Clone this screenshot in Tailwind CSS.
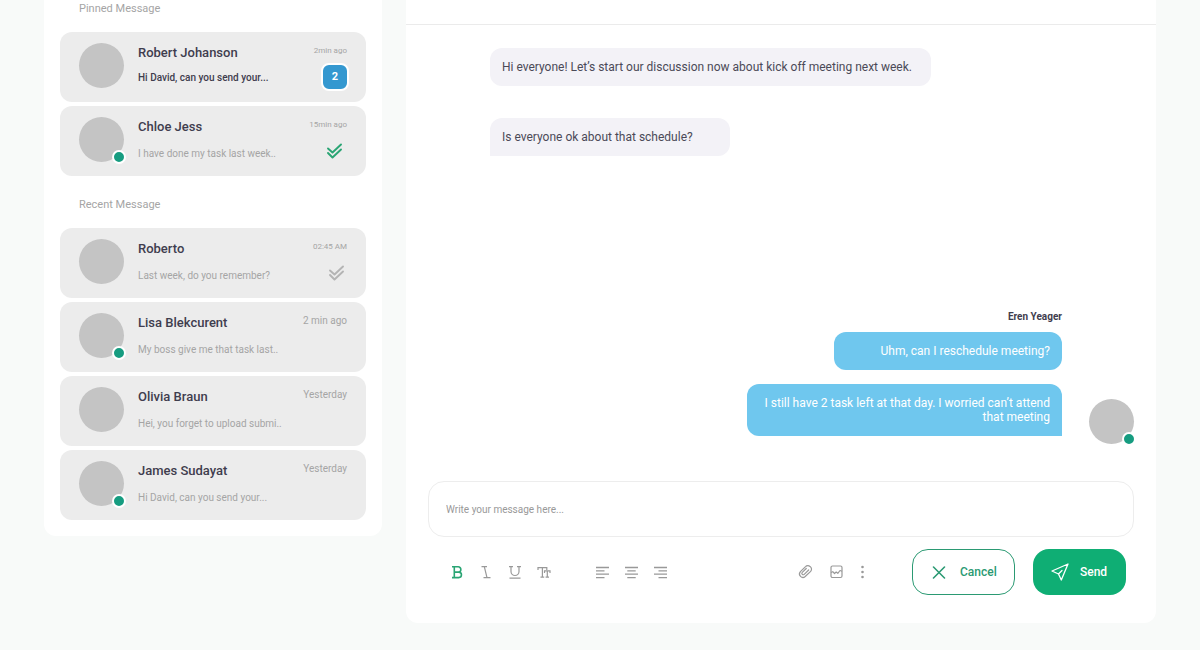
<!DOCTYPE html>
<html lang="en">
<head>
<meta charset="utf-8">
<meta name="viewport" content="width=device-width, initial-scale=1">
<title>Messages</title>
<script src="https://cdn.jsdelivr.net/npm/@tailwindcss/browser@4"></script>
</head>
<body class="min-h-screen bg-[#f8faf9] font-['Roboto','Liberation_Sans',sans-serif] text-[#3f3d4e]">
<div class="flex items-start gap-6 px-11">

  <!-- Conversations -->
  <aside class="w-[338px] shrink-0 rounded-b-xl bg-white px-4 pb-4">
    <h2 class="px-[19px] text-[11px] leading-[18px] text-[#a5a5a5]">Pinned Message</h2>
    <nav aria-label="Pinned messages" class="mt-3.5 flex flex-col gap-1">
      <a href="#" class="flex h-[70px] items-start gap-3.5 rounded-xl bg-[#ececec] px-[19px] pt-[11px]">
        <span class="size-[45px] shrink-0 rounded-full bg-[#c4c4c4]"></span>
        <span class="flex min-w-0 grow flex-col gap-[7px]">
          <span class="text-[13px] leading-5 font-medium">Robert Johanson</span>
          <span class="truncate text-[10px] leading-4 font-medium">Hi David, can you send your...</span>
        </span>
        <span class="flex shrink-0 flex-col items-end gap-1">
          <span class="text-[8px] leading-4 text-[#a5a5a5]">2min ago</span>
          <span class="-mr-0.5 flex size-7 items-center justify-center rounded-lg border-2 border-white bg-[#3498d0] text-[11px] font-bold text-white">2</span>
        </span>
      </a>
      <a href="#" class="flex h-[70px] items-start gap-3.5 rounded-xl bg-[#ececec] px-[19px] pt-[11px]">
        <span class="relative size-[45px] shrink-0 rounded-full bg-[#c4c4c4]"><span class="absolute -right-0.5 -bottom-0.5 size-3.5 rounded-full border-2 border-white bg-[#169c80]"></span></span>
        <span class="flex min-w-0 grow flex-col gap-[9px]">
          <span class="text-[13px] leading-5 font-medium">Chloe Jess</span>
          <span class="truncate text-[10px] leading-4 text-[#a5a5a5]">I have done my task last week..</span>
        </span>
        <span class="flex shrink-0 flex-col items-end gap-2.5">
          <span class="text-[8px] leading-4 text-[#a5a5a5]">15min ago</span>
          <svg class="mr-1 h-4 w-[17px]" viewBox="0 0 17 16" fill="none" stroke="#2aa574" stroke-width="1.900" stroke-linecap="round" stroke-linejoin="round" aria-label="Read"><path d="M2 5.500l4.500 4 8.500-8M2 10l4.500 4.500 8.500-8"/></svg>
        </span>
      </a>
    </nav>

    <h2 class="mt-5 px-[19px] text-[11px] leading-[18px] text-[#a5a5a5]">Recent Message</h2>
    <nav aria-label="Recent messages" class="mt-3.5 flex flex-col gap-1">
      <a href="#" class="flex h-[70px] items-start gap-3.5 rounded-xl bg-[#ececec] px-[19px] pt-[11px]">
        <span class="size-[45px] shrink-0 rounded-full bg-[#c4c4c4]"></span>
        <span class="flex min-w-0 grow flex-col gap-[9px]">
          <span class="text-[13px] leading-5 font-medium">Roberto</span>
          <span class="truncate text-[10px] leading-4 text-[#a5a5a5]">Last week, do you remember?</span>
        </span>
        <span class="flex shrink-0 flex-col items-end gap-2.5">
          <span class="text-[8px] leading-4 text-[#a5a5a5]">02:45 AM</span>
          <svg class="mr-0.5 h-4 w-[17px]" viewBox="0 0 17 16" fill="none" stroke="#b4b4b4" stroke-width="1.900" stroke-linecap="round" stroke-linejoin="round" aria-label="Delivered"><path d="M2 5.500l4.500 4 8.500-8M2 10l4.500 4.500 8.500-8"/></svg>
        </span>
      </a>
      <a href="#" class="flex h-[70px] items-start gap-3.5 rounded-xl bg-[#ececec] px-[19px] pt-[11px]">
        <span class="relative size-[45px] shrink-0 rounded-full bg-[#c4c4c4]"><span class="absolute -right-0.5 -bottom-0.5 size-3.5 rounded-full border-2 border-white bg-[#169c80]"></span></span>
        <span class="flex min-w-0 grow flex-col gap-[9px]">
          <span class="text-[13px] leading-5 font-medium">Lisa Blekcurent</span>
          <span class="truncate text-[10px] leading-4 text-[#a5a5a5]">My boss give me that task last..</span>
        </span>
        <span class="shrink-0 text-[10px] leading-4 text-[#a5a5a5]">2 min ago</span>
      </a>
      <a href="#" class="flex h-[70px] items-start gap-3.5 rounded-xl bg-[#ececec] px-[19px] pt-[11px]">
        <span class="size-[45px] shrink-0 rounded-full bg-[#c4c4c4]"></span>
        <span class="flex min-w-0 grow flex-col gap-[9px]">
          <span class="text-[13px] leading-5 font-medium">Olivia Braun</span>
          <span class="truncate text-[10px] leading-4 text-[#a5a5a5]">Hei, you forget to upload submi..</span>
        </span>
        <span class="shrink-0 text-[10px] leading-4 text-[#a5a5a5]">Yesterday</span>
      </a>
      <a href="#" class="flex h-[70px] items-start gap-3.5 rounded-xl bg-[#ececec] px-[19px] pt-[11px]">
        <span class="relative size-[45px] shrink-0 rounded-full bg-[#c4c4c4]"><span class="absolute -right-0.5 -bottom-0.5 size-3.5 rounded-full border-2 border-white bg-[#169c80]"></span></span>
        <span class="flex min-w-0 grow flex-col gap-[9px]">
          <span class="text-[13px] leading-5 font-medium">James Sudayat</span>
          <span class="truncate text-[10px] leading-4 text-[#a5a5a5]">Hi David, can you send your...</span>
        </span>
        <span class="shrink-0 text-[10px] leading-4 text-[#a5a5a5]">Yesterday</span>
      </a>
    </nav>
  </aside>

  <!-- Chat -->
  <main class="min-w-0 grow rounded-b-xl bg-white pb-7">
    <header class="h-[25px] border-b border-[#ebebeb]"></header>

    <section aria-label="Messages" class="px-[22px] pt-[23px] text-xs leading-[14px]">
      <div class="flex flex-col items-start gap-8 pl-[62px] text-[#4b4a57]">
        <p class="w-[441px] max-w-full rounded-xl bg-[#f3f2f7] p-3">Hi everyone! Let’s start our discussion now about kick off meeting next week.</p>
        <p class="w-60 max-w-full rounded-xl rounded-bl-none bg-[#f3f2f7] p-3">Is everyone ok about that schedule?</p>
      </div>
      <div class="mt-[154px] flex items-end justify-end gap-[27px] text-right">
        <div class="flex min-w-0 flex-col items-end pb-2">
          <p class="text-[10px] font-bold">Eren Yeager</p>
          <p class="mt-2 w-[228px] max-w-full rounded-xl bg-[#6fc7ee] p-3 text-white">Uhm, can I reschedule meeting?</p>
          <p class="mt-3.5 w-[315px] max-w-full rounded-xl rounded-br-none bg-[#6fc7ee] p-3 text-white">I still have 2 task left at that day. I worried can’t attend<br>that meeting</p>
        </div>
        <span class="relative size-[45px] shrink-0 rounded-full bg-[#c4c4c4]"><span class="absolute -right-0.5 -bottom-0.5 size-3.5 rounded-full border-2 border-white bg-[#169c80]"></span></span>
      </div>
    </section>

    <form class="mt-[37px] px-[22px]">
      <input type="text" aria-label="Message" placeholder="Write your message here..." class="block h-14 w-full rounded-2xl border border-[#ededed] bg-white px-[17px] text-[10px] placeholder:text-[#999999]">
      <div class="mt-3 flex items-center pr-2 pl-[21px] text-[#999999]">
        <div class="flex gap-[13px]">
          <button type="button" aria-label="Bold" aria-pressed="true" class="text-[#2aa574]"><svg class="size-4" viewBox="0 0 16 16" fill="none" stroke="currentColor" stroke-width="1.600"><path d="M3 2.800H9.200a2.600 2.600 0 0 1 0 5.300H5.300M9.200 8.100h.5a2.700 2.700 0 0 1 0 5.500H3M5.300 2.800v10.800"/></svg></button>
          <button type="button" aria-label="Italic"><svg class="size-4" viewBox="0 0 16 16" fill="none" stroke="currentColor" stroke-width="1.200"><path d="M3.500 2.600h5.500M6.300 2.600l2.700 11M5.500 13.600H12.500"/></svg></button>
          <button type="button" aria-label="Underline"><svg class="size-4" viewBox="0 0 16 16" fill="none" stroke="currentColor" stroke-width="1.200"><path d="M2 2.600h4M10 2.600h4M4 2.600V7.500a4 4 0 0 0 8 0V2.600M2.500 14.200h11"/></svg></button>
          <button type="button" aria-label="Text size"><svg class="size-4" viewBox="0 0 16 16" fill="none" stroke="currentColor" stroke-width="1.200"><path d="M2 6V3.600h8.800v2.400M6.400 3.600v9.600M4.500 13.200h3.700M8.500 9V6.900h5.500V9M11.300 6.900v6.300M9.600 13.200h3.400"/></svg></button>
        </div>
        <div class="ml-[42px] flex gap-[13px]">
          <button type="button" aria-label="Align left"><svg class="size-4" viewBox="0 0 16 16" fill="none" stroke="currentColor" stroke-width="1.300"><path d="M2 3.500h13M2 6.800h8.500M2 10.200h13M2 13.600h8.500"/></svg></button>
          <button type="button" aria-label="Align center"><svg class="size-4" viewBox="0 0 16 16" fill="none" stroke="currentColor" stroke-width="1.300"><path d="M2 3.500h13M4.300 6.800h8.400M2 10.200h13M4.300 13.600h8.400"/></svg></button>
          <button type="button" aria-label="Align right"><svg class="size-4" viewBox="0 0 16 16" fill="none" stroke="currentColor" stroke-width="1.300"><path d="M2 3.500h13M6.500 6.800h8.500M2 10.200h13M6.500 13.600h8.500"/></svg></button>
        </div>
        <div class="ml-auto flex">
          <button type="button" aria-label="Attach file"><svg class="size-4" viewBox="0 0 24 24" fill="none" stroke="currentColor" stroke-width="1.800" stroke-linecap="round" stroke-linejoin="round"><path d="M20.500 11l-8.200 7.700a5.100 5.100 0 0 1-7.200-7.200l7.700-7.600a4.600 4.600 0 0 1 6.800 0a4.600 4.600 0 0 1 .9 7.100M17.500 9l-6.700 6.500a2 2 0 0 1-2.900-2.900l6-5.900"/></svg></button>
          <button type="button" aria-label="Insert picture" class="ml-4"><svg class="size-4" viewBox="0 0 16 16" fill="none" stroke="currentColor" stroke-width="1.200" stroke-linejoin="round"><rect x="2" y="2" width="11" height="11.500" rx="1.500"/><path d="M2 8.500l1.800-.8L5.500 9.500 7.200 8l1.600 1.300L11 6.500l2 .8"/></svg></button>
          <button type="button" aria-label="More options" class="ml-2.5"><svg class="size-4" viewBox="0 0 16 16" fill="currentColor"><circle cx="7.500" cy="3" r="1.300"/><circle cx="7.500" cy="8" r="1.300"/><circle cx="7.500" cy="13" r="1.300"/></svg></button>
        </div>
        <button type="button" class="ml-[41px] flex h-[46px] w-[103px] items-center gap-3.5 rounded-2xl border border-[#2b9a73] pl-[19px] text-xs font-medium text-[#2b9a73]">
          <svg class="size-3.5" viewBox="0 0 14 14" fill="none" stroke="currentColor" stroke-width="1.600" stroke-linecap="round" aria-hidden="true"><path d="M1.500 2l11 11M12.500 2l-11 11"/></svg>Cancel</button>
        <button type="submit" class="ml-[18px] flex h-[46px] w-[93px] items-center gap-[11px] rounded-2xl bg-[#0fae74] pl-[18px] text-xs font-medium text-white">
          <svg class="size-[18px]" viewBox="0 0 18 18" fill="none" stroke="currentColor" stroke-width="1.300" stroke-linejoin="round" stroke-linecap="round" aria-hidden="true"><path d="M17 1L1 8l6.500 3L10.300 17zM7.500 11l3.500-3.500"/></svg>Send</button>
      </div>
    </form>
  </main>
</div>
</body>
</html>
